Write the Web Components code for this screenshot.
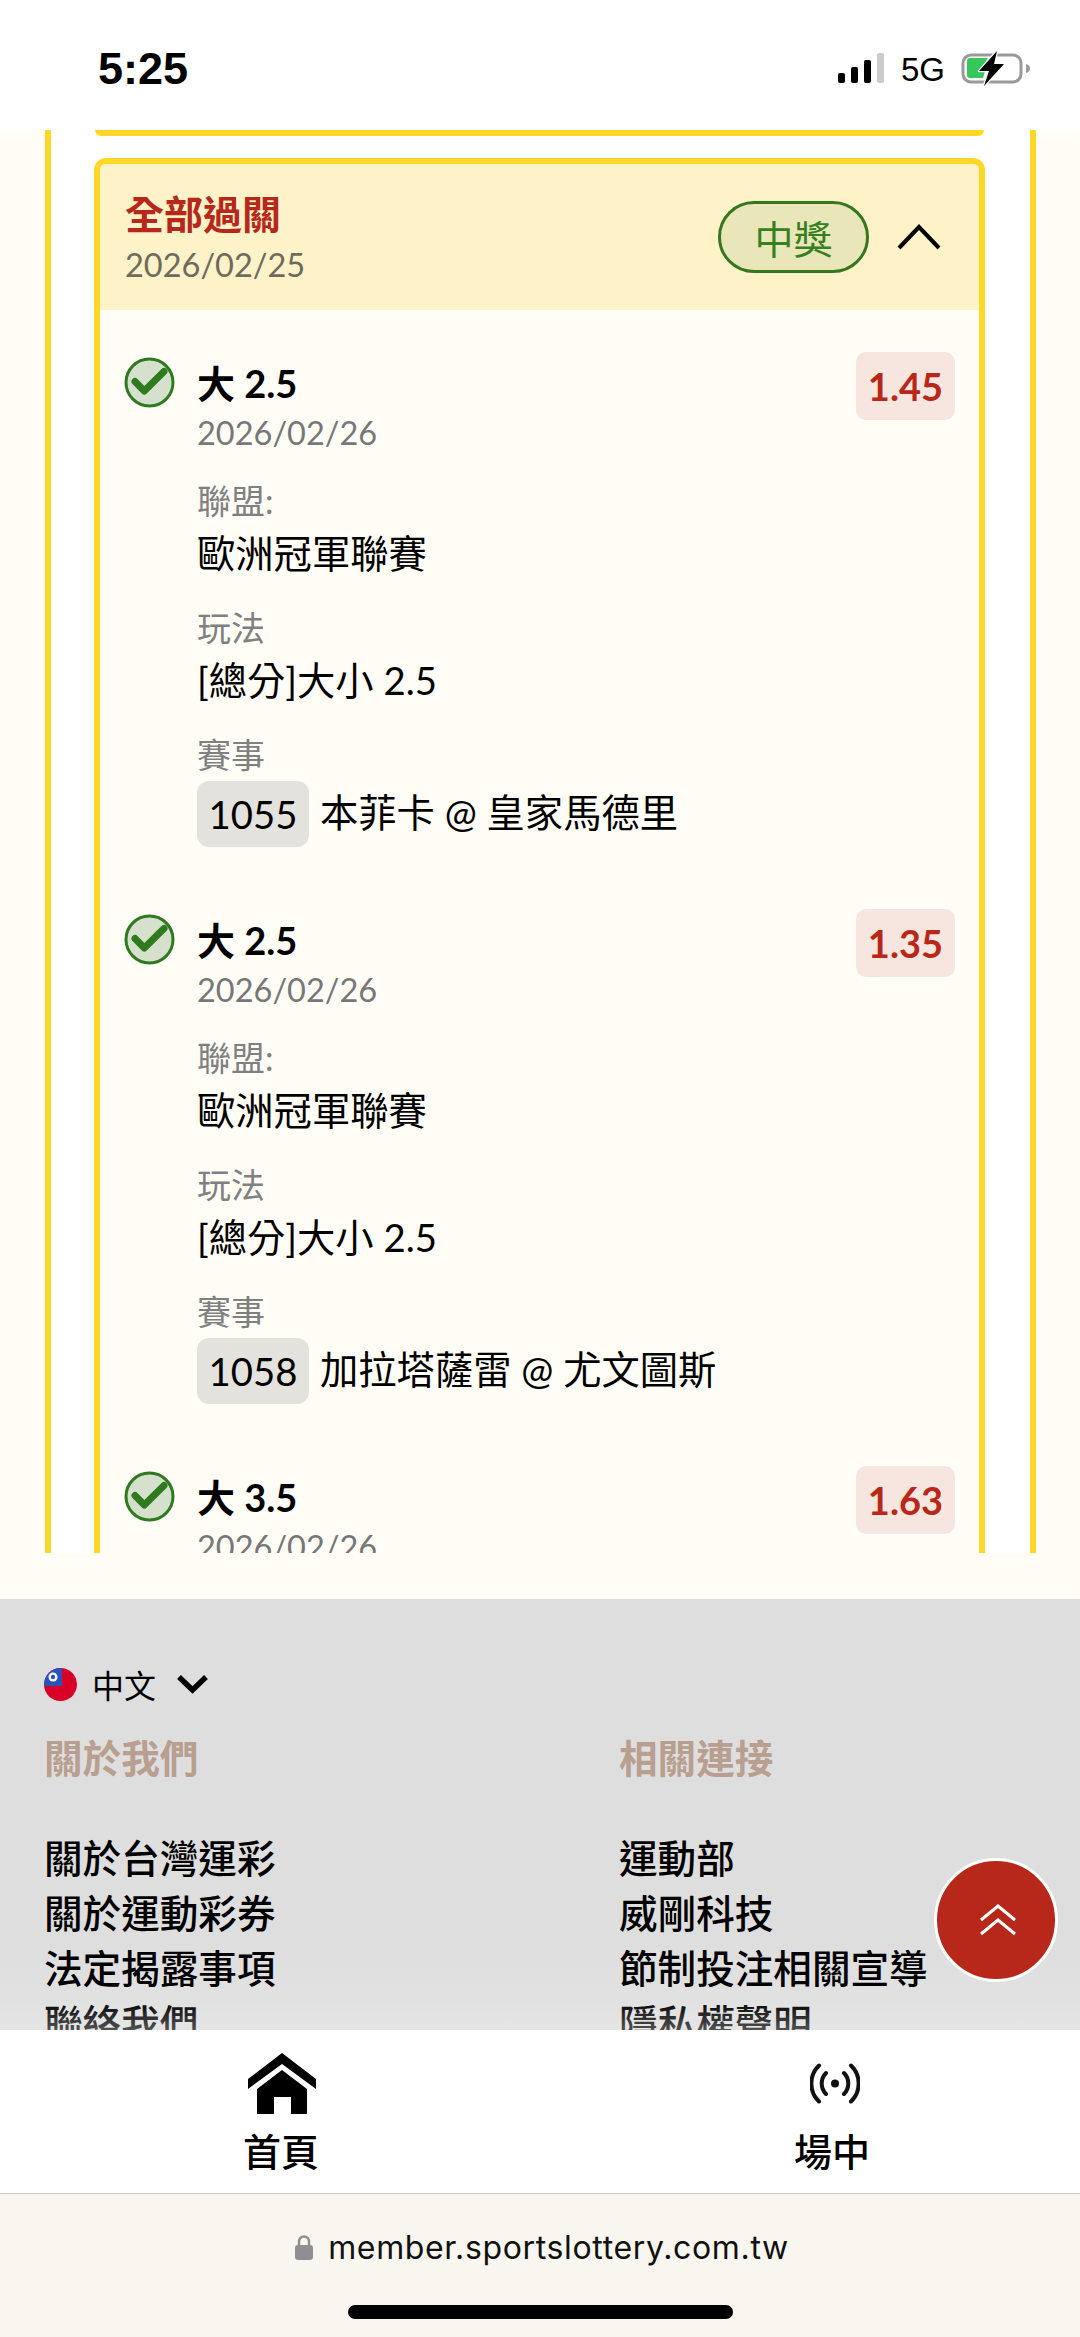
<!DOCTYPE html>
<html lang="zh-Hant">
<head>
<meta charset="utf-8">
<title>Sports Lottery</title>
<style>
html, body {
  margin: 0;
  height: 2337px;
  overflow: hidden;
  background: #fffdf6;
  color: #000;
  font-family: Lato, "Noto Sans CJK TC", sans-serif;
}
</style>
</head>
<body>
<status-bar></status-bar>

<bet-panel>
  <bet-card title-text="全部過關" date="2026/02/25" status="中獎">
    <bet-leg odds="1.45">
      <span slot="market">大 2.5</span>
      <span slot="date">2026/02/26</span>
      <leg-field label="聯盟:">歐洲冠軍聯賽</leg-field>
      <leg-field label="玩法">[總分]大小 2.5</leg-field>
      <leg-field label="賽事" code="1055">本菲卡 @ 皇家馬德里</leg-field>
    </bet-leg>
    <bet-leg odds="1.35">
      <span slot="market">大 2.5</span>
      <span slot="date">2026/02/26</span>
      <leg-field label="聯盟:">歐洲冠軍聯賽</leg-field>
      <leg-field label="玩法">[總分]大小 2.5</leg-field>
      <leg-field label="賽事" code="1058">加拉塔薩雷 @ 尤文圖斯</leg-field>
    </bet-leg>
    <bet-leg odds="1.63">
      <span slot="market">大 3.5</span>
      <span slot="date">2026/02/26</span>
    </bet-leg>
  </bet-card>
</bet-panel>

<site-footer>
  <link-column heading="關於我們">
    <a>關於台灣運彩</a><a>關於運動彩券</a><a>法定揭露事項</a><a>聯絡我們</a>
  </link-column>
  <link-column heading="相關連接">
    <a>運動部</a><a>威剛科技</a><a>節制投注相關宣導</a><a>隱私權聲明</a>
  </link-column>
</site-footer>

<tab-bar></tab-bar>
<browser-bar></browser-bar>

<script>
const attach = (el, html) => {
  el.attachShadow({ mode: "open" });
  const template = document.createElement("template");
  template.innerHTML = html;
  el.shadowRoot.appendChild(template.content.cloneNode(true));
};

class StatusBar extends HTMLElement {
  constructor() {
    super();
    attach(this, `
<style>
:host { display: flex; align-items: flex-start; height: 130px; background: #fff; font-family: "Liberation Sans", sans-serif; }
.time { margin: 45px 0 0 98px; font-size: 45px; line-height: 48px; font-weight: 700; }
.right { display: flex; margin: 50px 0 0 auto; padding-right: 46px; }
.signal { display: flex; align-items: flex-end; gap: 6px; height: 30px; margin-top: 3px; }
.signal i { width: 7px; background: #000; border-radius: 2px; }
.signal i:last-child { background: #ccc; }
.net { margin-left: 17px; font-size: 33px; line-height: 40px; }
svg { display: block; margin-left: 16px; }
</style>
<div class="time">5:25</div>
<div class="right">
  <div class="signal"><i style="height:10px"></i><i style="height:16px"></i><i style="height:23px"></i><i style="height:30px"></i></div>
  <div class="net">5G</div>
  <svg width="73" height="36" viewBox="0 0 73 36">
    <rect x="2" y="5" width="58" height="27" rx="8" fill="none" stroke="#9a9a9a" stroke-width="3"/>
    <path d="M6 11a3 3 0 0 1 3-3h18l-8 13h5l-2 7H9a3 3 0 0 1-3-3z" fill="#34c759"/>
    <path d="M63 14c3 1 4 2 4 4.500s-1 3.500-4 4.500z" transform="translate(2 0)" fill="#9a9a9a"/>
    <path d="M36 1 L18 21 H28 L23 36 L43 14 H33 Z" fill="#000" stroke="#fff" stroke-width="2.500" stroke-linejoin="round" paint-order="stroke"/>
  </svg>
</div>`);
  }
}

class BetPanel extends HTMLElement {
  constructor() {
    super();
    attach(this, `
<style>
:host { display: block; height: 1469px; padding: 0 44px 46px 45px; box-sizing: border-box; background: #fffdf6; }
.frame { height: 100%; overflow: hidden; padding: 0 45px 0 43px; background: #fff; border: solid #ffd726; border-width: 0 6px; }
.prev { height: 6px; margin: 0 1px 22px; background: #ffd726; border-radius: 0 0 12px 12px; }
</style>
<div class="frame">
  <div class="prev"></div>
  <slot></slot>
</div>`);
  }
}

class BetCard extends HTMLElement {
  constructor() {
    super();
    attach(this, `
<style>
:host { display: block; border: 6px solid #ffd726; border-radius: 12px; background: #fffdf6; }
header { display: flex; align-items: center; height: 146px; box-sizing: border-box; padding: 0 38px 0 25px; background: #fdf2c8; border-radius: 6px 6px 0 0; }
.name { color: #b7281a; font-size: 39px; line-height: 50px; font-weight: 700; }
.when { margin-top: 3px; color: #6f6a5c; font-size: 32.500px; line-height: 46px; }
.text { padding-top: 3px; }
.state { display: flex; align-items: center; justify-content: center; width: 151px; height: 72px; box-sizing: border-box; margin-left: auto; border: 3px solid #36761f; border-radius: 36px; background: #e9e6ba; color: #36801f; font-size: 39px; }
svg { display: block; margin-left: 28px; }
.legs { padding: 42px 24px 0 24px; }
</style>
<header>
  <div class="text">
    <div class="name"></div>
    <div class="when"></div>
  </div>
  <div class="state"></div>
  <svg width="44" height="26" viewBox="0 0 44 26"><path d="M2 24 22 3l20 21" fill="none" stroke="#000" stroke-width="4"/></svg>
</header>
<div class="legs"><slot></slot></div>`);
  }
  connectedCallback() {
    this.shadowRoot.querySelector(".name").textContent = this.getAttribute("title-text");
    this.shadowRoot.querySelector(".when").textContent = this.getAttribute("date");
    this.shadowRoot.querySelector(".state").textContent = this.getAttribute("status");
  }
}

class BetLeg extends HTMLElement {
  constructor() {
    super();
    attach(this, `
<style>
:host { display: grid; grid-template-columns: 51px 1fr auto; column-gap: 22px; margin-bottom: 62px; }
svg { display: block; margin-top: 5px; }
.market { font-size: 38px; line-height: 47px; font-weight: 700; padding-top: 8px; }
.date { margin-bottom: -3px; color: #777; font-size: 32.500px; line-height: 52px; }
.odds { align-self: start; padding: 0 12px; height: 68px; line-height: 68px; border-radius: 10px; background: #f7e6df; color: #b7281a; font-size: 38px; font-weight: 700; }
</style>
<svg width="51" height="51" viewBox="0 0 51 51">
  <circle cx="25.500" cy="25.500" r="23.500" fill="#d5e1cc" stroke="#2f7a1f" stroke-width="3"/>
  <path d="M11 24.500 20.300 34 40 14.500" fill="none" stroke="#2f7a1f" stroke-width="7" stroke-linecap="round" stroke-linejoin="round"/>
</svg>
<div>
  <div class="market"><slot name="market"></slot></div>
  <div class="date"><slot name="date"></slot></div>
  <slot></slot>
</div>
<div class="odds"></div>`);
  }
  connectedCallback() {
    this.shadowRoot.querySelector(".odds").textContent = this.getAttribute("odds");
  }
}

class LegField extends HTMLElement {
  constructor() {
    super();
    attach(this, `
<style>
:host { display: block; margin-top: 22px; }
.label { color: #808080; font-size: 34px; line-height: 45px; }
.value { display: flex; align-items: center; font-size: 38.300px; line-height: 60px; }
.code { display: none; margin: 4px 11px 0 0; width: 112px; height: 66px; line-height: 66px; text-align: center; border-radius: 12px; background: #e4e2dd; }
</style>
<div class="label"></div>
<div class="value"><span class="code"></span><span><slot></slot></span></div>`);
  }
  connectedCallback() {
    this.shadowRoot.querySelector(".label").textContent = this.getAttribute("label");
    const code = this.getAttribute("code");
    if (code) {
      const badge = this.shadowRoot.querySelector(".code");
      badge.textContent = code;
      badge.style.display = "block";
    }
  }
}

class SiteFooter extends HTMLElement {
  constructor() {
    super();
    attach(this, `
<style>
:host { display: block; position: relative; height: 431px; overflow: hidden; box-sizing: border-box; padding: 68px 0 0 44px; background: linear-gradient(#dedede 80%, #e3e3e3); }
.lang { display: flex; align-items: center; height: 34px; font-size: 32px; }
.lang span { margin-left: 15px; }
.lang .chev { margin-left: 20px; }
.cols { display: grid; grid-template-columns: 575px 1fr; margin-top: 30px; }
.fade { position: absolute; left: 0; right: 0; bottom: 0; height: 30px; background: linear-gradient(rgba(232,232,232,0), rgba(232,232,232,.35)); }
.top { position: absolute; left: 934px; top: 259px; display: flex; align-items: center; justify-content: center; width: 124px; height: 124px; box-sizing: border-box; border: 3px solid #fff; border-radius: 50%; background: #b7281a; }
.top svg { margin-left: 3px; }
</style>
<div class="lang">
  <svg width="33" height="33" viewBox="0 0 33 33">
    <clipPath id="c"><circle cx="16.500" cy="16.500" r="16.500"/></clipPath>
    <g clip-path="url(#c)">
      <rect width="33" height="33" fill="#d80027"/>
      <rect width="18" height="18" fill="#2a52be"/>
      <circle cx="9" cy="9" r="4.500" fill="#fff"/>
      <circle cx="9" cy="9" r="2.200" fill="#2a52be"/>
    </g>
  </svg>
  <span>中文</span>
  <svg class="chev" width="33" height="20" viewBox="0 0 33 20"><path d="M3 3 16.500 16 30 3" fill="none" stroke="#000" stroke-width="5.500"/></svg>
</div>
<div class="cols"><slot></slot></div>
<div class="fade"></div>
<div class="top">
  <svg width="36" height="32" viewBox="0 0 36 32" fill="none" stroke="#fff" stroke-width="3"><path d="M1 16 18 2l17 14M1 30 18 16l17 14"/></svg>
</div>`);
  }
}

class LinkColumn extends HTMLElement {
  constructor() {
    super();
    attach(this, `
<style>
:host { display: block; font-size: 38.600px; line-height: 55px; font-weight: 500; }
h2 { margin: 0 0 45px; color: #b89f90; font-size: 38.600px; line-height: 55px; font-weight: 700; }
::slotted(a) { display: block; }
</style>
<h2></h2>
<slot></slot>`);
  }
  connectedCallback() {
    this.shadowRoot.querySelector("h2").textContent = this.getAttribute("heading");
  }
}

class TabBar extends HTMLElement {
  constructor() {
    super();
    attach(this, `
<style>
:host { display: flex; gap: 451px; height: 163px; box-sizing: border-box; padding-left: 231px; background: #fff; }
.tab { display: flex; flex-direction: column; align-items: center; width: 100px; font-size: 38px; font-weight: 500; }
.icon { display: flex; align-items: center; height: 61px; margin-top: 23px; }
.tab span { margin-top: 9px; line-height: 56px; }
</style>
<div class="tab">
  <div class="icon"><svg width="68" height="61" viewBox="0 0 68 61" style="margin-left:2px"><path d="M34 0 68 26V36L34 11 0 36V26ZM34 17 59 36V61H43V44H26V61H9V36Z" fill="#000"/></svg></div>
  <span>首頁</span>
</div>
<div class="tab">
  <div class="icon"><svg width="50" height="41" viewBox="0 0 50 41" fill="none" stroke="#111" stroke-width="4" stroke-linecap="round" style="margin-left:5px"><circle cx="25" cy="20.500" r="4" fill="#111" stroke="none"/><path d="M16 10a15 15 0 0 0 0 21M34 10a15 15 0 0 1 0 21M9 2.500a25 25 0 0 0 0 36M41 2.500a25 25 0 0 1 0 36"/></svg></div>
  <span>場中</span>
</div>`);
  }
}

class BrowserBar extends HTMLElement {
  constructor() {
    super();
    attach(this, `
<style>
:host { display: flex; flex-direction: column; align-items: center; height: 144px; box-sizing: border-box; border-top: 1px solid #c8c8c8; background: #f9f6ef; font-family: Inter, sans-serif; }
.url { display: flex; align-items: center; gap: 15px; height: 44px; margin-top: 31px; padding-left: 4px; font-size: 32px; letter-spacing: .65px; color: #111; }
.home { width: 385px; height: 14px; margin-top: 36px; border-radius: 7px; background: #000; }
</style>
<div class="url">
  <svg width="18" height="25" viewBox="0 0 18 25"><path d="M4 11V6.500a5 5 0 0 1 10 0V11" fill="none" stroke="#8e8e93" stroke-width="2.500"/><rect y="10" width="18" height="15" rx="3" fill="#8e8e93"/></svg>
  <span>member.sportslottery.com.tw</span>
</div>
<div class="home"></div>`);
  }
}

customElements.define("status-bar", StatusBar);
customElements.define("bet-panel", BetPanel);
customElements.define("bet-card", BetCard);
customElements.define("bet-leg", BetLeg);
customElements.define("leg-field", LegField);
customElements.define("site-footer", SiteFooter);
customElements.define("link-column", LinkColumn);
customElements.define("tab-bar", TabBar);
customElements.define("browser-bar", BrowserBar);
</script>
</body>
</html>
